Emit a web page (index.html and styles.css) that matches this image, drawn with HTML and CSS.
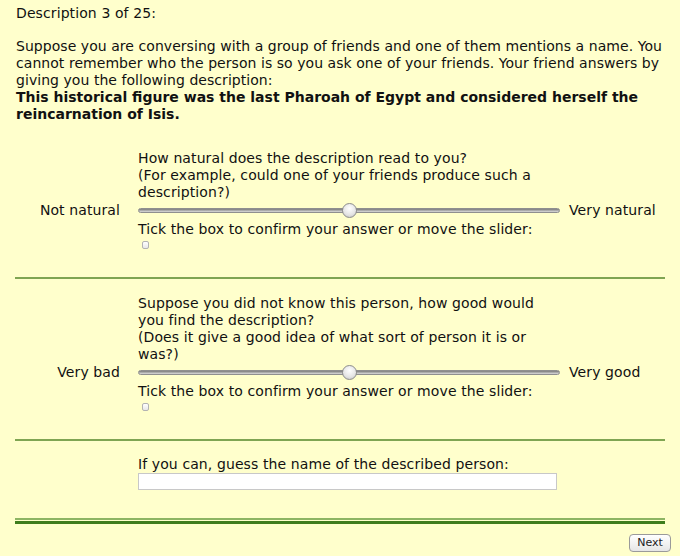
FILE: index.html
```html
<!DOCTYPE html>
<html lang="en">
<head>
  <meta charset="UTF-8">
  <title>Description 3 of 25</title>
  <link rel="stylesheet" href="styles.css">
</head>
<body>
  <div class="page">
    <p class="counter">Description 3 of 25:</p>

    <p class="intro">
      Suppose you are conversing with a group of friends and one of them mentions a name. You
      cannot remember who the person is so you ask one of your friends. Your friend answers by
      giving you the following description:<br>
      <strong>This historical figure was the last Pharoah of Egypt and considered herself the reincarnation of Isis.</strong>
    </p>

    <div class="question">
      <div class="q-text">How natural does the description read to you?<br>(For example, could one of your friends produce such a description?)</div>
      <div class="label-left">Not natural</div>
      <div class="slider-cell"><input type="range" class="slider" min="0" max="100" value="50"></div>
      <div class="label-right">Very natural</div>
      <div class="q-confirm">
        Tick the box to confirm your answer or move the slider:
        <input type="checkbox" class="tick">
      </div>
    </div>

    <div class="rule"></div>

    <div class="question">
      <div class="q-text">Suppose you did not know this person, how good would you find the description?<br>(Does it give a good idea of what sort of person it is or was?)</div>
      <div class="label-left">Very bad</div>
      <div class="slider-cell"><input type="range" class="slider" min="0" max="100" value="50"></div>
      <div class="label-right">Very good</div>
      <div class="q-confirm">
        Tick the box to confirm your answer or move the slider:
        <input type="checkbox" class="tick">
      </div>
    </div>

    <div class="rule"></div>

    <div class="question guess">
      <div class="q-text">
        If you can, guess the name of the described person:
        <input type="text" class="guess-input">
      </div>
    </div>

    <div class="rule-double"></div>

    <div class="footer">
      <button class="next">Next</button>
    </div>
  </div>
</body>
</html>
```

FILE: styles.css
```css
* {
  box-sizing: border-box;
}
body {
  margin: 0;
  background-color: #ffffcc;
  color: #111;
  font-family: 'DejaVu Sans', Verdana, sans-serif;
  font-size: 14px;
  line-height: 17px;
  letter-spacing: 0.1px;
}
.page {
  padding: 5px 15px 0 15px;
  width: 680px;
}
p {
  margin: 0;
}
strong {
  letter-spacing: 0;
}
.counter {
  margin-left: 1px;
  margin-bottom: 16px;
}
.intro {
  margin-left: 1px;
  margin-bottom: 11px;
  letter-spacing: 0.05px;
}
.question {
  display: grid;
  grid-template-columns: 123px 422px 1fr;
  padding: 16px 0 28px 0;
}
.q-text, .q-confirm {
  grid-column: 2;
}
.label-left {
  grid-column: 1;
  text-align: right;
  padding-right: 18px;
  height: 19px;
  line-height: 19px;
}
.label-right {
  padding-left: 9px;
  height: 19px;
  line-height: 19px;
}
.slider-cell {
  height: 19px;
  display: flex;
  align-items: center;
}
.slider {
  -webkit-appearance: none;
  appearance: none;
  width: 100%;
  height: 16px;
  margin: 0;
  background: transparent;
}
.slider::-webkit-slider-runnable-track {
  height: 5px;
  border-radius: 3px;
  background: linear-gradient(#7a7a7a, #b5b5b5 60%, #dcdcdc);
  border: 1px solid #8f8f8f;
}
.slider::-webkit-slider-thumb {
  -webkit-appearance: none;
  width: 15px;
  height: 15px;
  margin-top: -6px;
  border-radius: 50%;
  border: 1px solid #8c8c8c;
  background: radial-gradient(circle at 50% 35%, #ffffff, #e4e4e4 60%, #bdbdbd);
}
.q-confirm {
  padding-top: 1px;
}
.tick {
  -webkit-appearance: none;
  appearance: none;
  display: block;
  width: 7px;
  height: 8px;
  margin: 3px 0 0 4px;
  border: 1px solid #b3b3b3;
  border-radius: 2px;
  background: linear-gradient(#ffffff, #e8e8e8);
}
.rule {
  border-top: 2px solid #7fa552;
}
.guess {
  padding-top: 15px;
  padding-bottom: 28px;
}
.guess-input {
  display: block;
  width: 419px;
  height: 17px;
  margin: 0;
  padding: 0 3px;
  border: 1px solid #c8c8c8;
  background: #fff;
  font: inherit;
}
.rule-double {
  height: 6px;
  border-top: 2px solid #8db563;
  border-bottom: 3px solid #3f7d1d;
}
.footer {
  display: flex;
  justify-content: flex-end;
  margin-right: -6px;
  padding-top: 10px;
}
.next {
  width: 42px;
  height: 18px;
  padding: 0;
  border: 1px solid #9a9a9a;
  border-radius: 4px;
  background: linear-gradient(#ffffff, #e6e6e6);
  color: #222;
  font-family: 'DejaVu Sans', Verdana, sans-serif;
  font-size: 11px;
  line-height: 16px;
  letter-spacing: 0;
}
```
